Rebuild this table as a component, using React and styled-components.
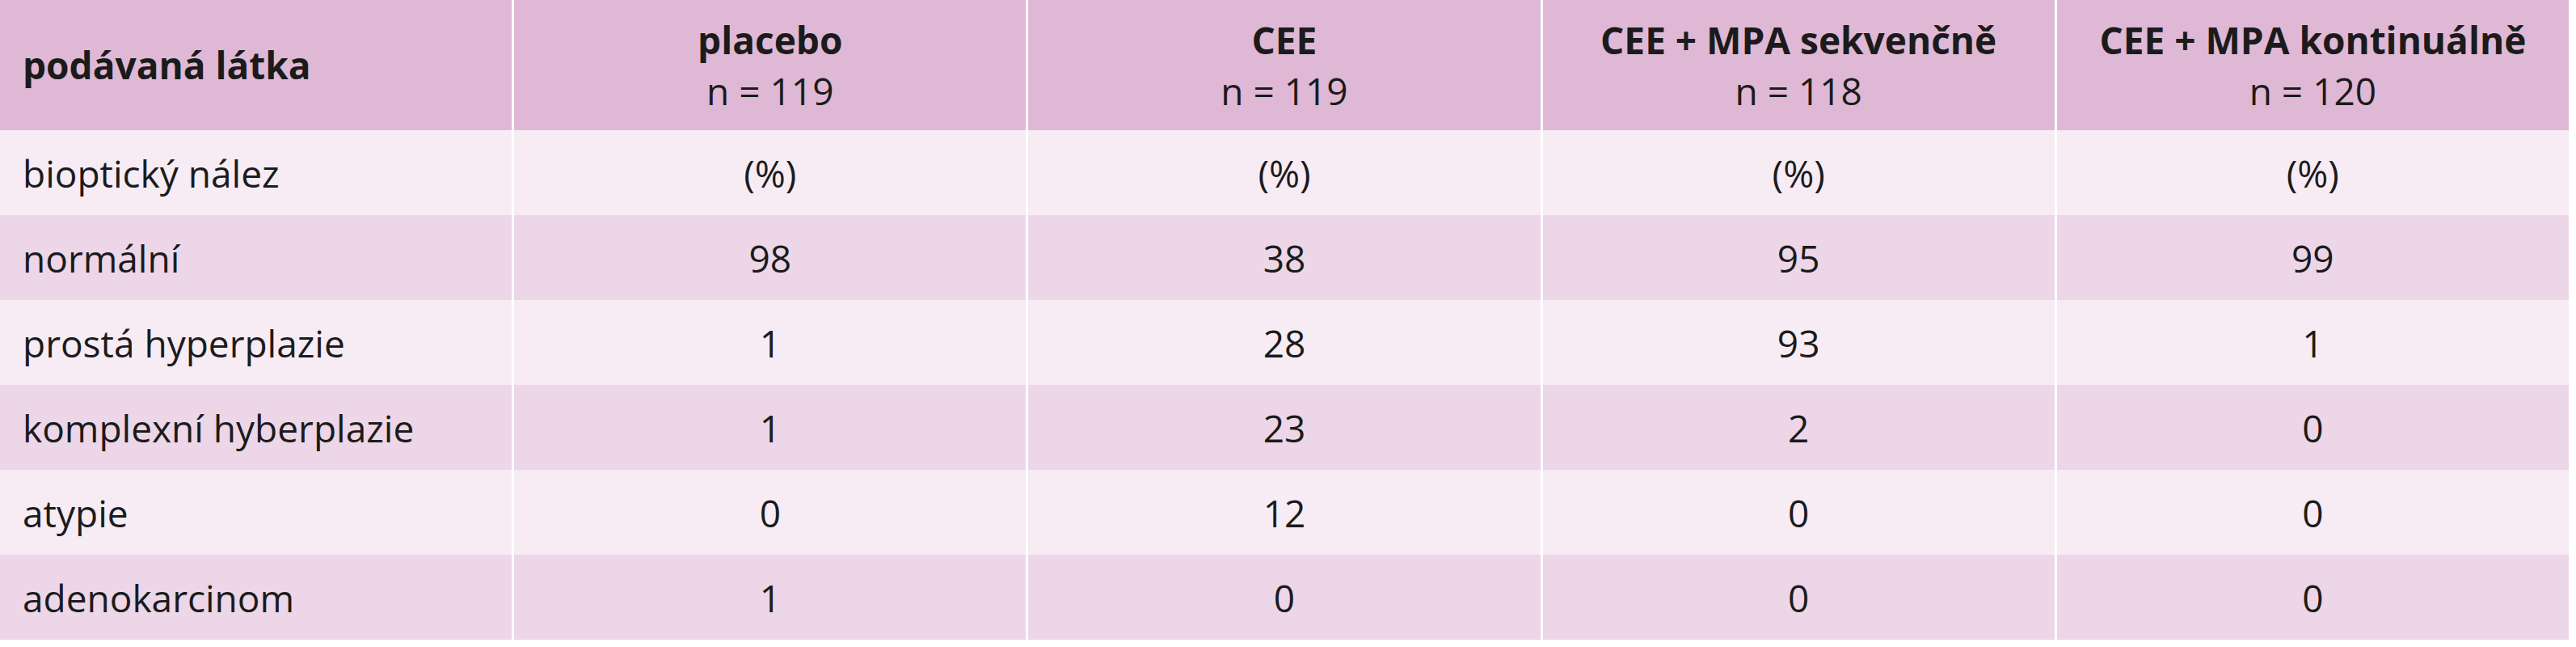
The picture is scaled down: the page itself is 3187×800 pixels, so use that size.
import React from "react";
import styled, { createGlobalStyle } from "styled-components";

const GlobalStyle = createGlobalStyle`
  body {
    margin: 0;
    background: #ffffff;
    font-family: "Open Sans", "Noto Sans", sans-serif;
    color: #1b1b1b;
  }
`;

const Table = styled.table`
  width: 3178px;
  border-collapse: separate;
  border-spacing: 0;
  table-layout: fixed;
  font-size: 46px;
`;

const LabelCol = styled.col`
  width: 633px;
`;

const GroupCol = styled.col`
  width: 636px;
`;

const HeadCell = styled.th`
  height: 161px;
  padding: 0 0 0 ${(p) => (p.$first ? "28px" : "0")};
  background: #dfb8d5;
  font-weight: 700;
  text-align: ${(p) => (p.$first ? "left" : "center")};
  vertical-align: middle;
  border-left: ${(p) => (p.$first ? "none" : "3px solid #ffffff")};
  line-height: 1.36;
`;

const SubLine = styled.span`
  display: block;
  font-weight: 400;
`;

const Row = styled.tr`
  background: ${(p) => (p.$odd ? "#f7ebf4" : "#ecd6e8")};
`;

const Cell = styled.td`
  height: 105px;
  padding: 0 0 0 ${(p) => (p.$first ? "28px" : "0")};
  text-align: ${(p) => (p.$first ? "left" : "center")};
  vertical-align: middle;
  border-left: ${(p) => (p.$first ? "none" : "3px solid #ffffff")};
  white-space: nowrap;
`;

const groups = [
  { name: "placebo", n: 119 },
  { name: "CEE", n: 119 },
  { name: "CEE + MPA sekvenčně", n: 118 },
  { name: "CEE + MPA kontinuálně", n: 120 },
];

const rows = [
  ["bioptický nález", "(%)", "(%)", "(%)", "(%)"],
  ["normální", "98", "38", "95", "99"],
  ["prostá hyperplazie", "1", "28", "93", "1"],
  ["komplexní hyberplazie", "1", "23", "2", "0"],
  ["atypie", "0", "12", "0", "0"],
  ["adenokarcinom", "1", "0", "0", "0"],
];

const App = () => {
  return (
    <>
      <GlobalStyle />
      <Table>
        <colgroup>
          <LabelCol />
          {groups.map((g) => (
            <GroupCol key={g.name} />
          ))}
        </colgroup>
        <thead>
          <tr>
            <HeadCell $first>podávaná látka</HeadCell>
            {groups.map((g) => (
              <HeadCell key={g.name}>
                {g.name}
                <SubLine>n = {g.n}</SubLine>
              </HeadCell>
            ))}
          </tr>
        </thead>
        <tbody>
          {rows.map((r, i) => (
            <Row key={r[0]} $odd={i % 2 === 0}>
              {r.map((v, j) => (
                <Cell key={j} $first={j === 0}>
                  {v}
                </Cell>
              ))}
            </Row>
          ))}
        </tbody>
      </Table>
    </>
  );
};

export default App;
